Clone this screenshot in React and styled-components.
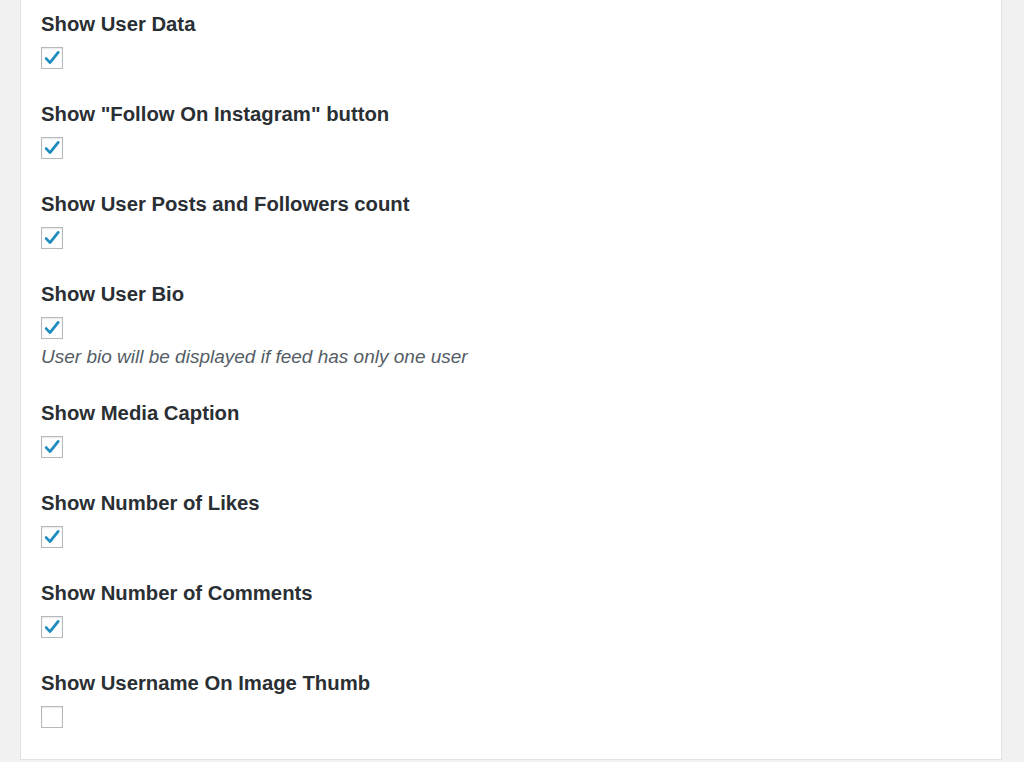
import React, { useState } from 'react';
import styled, { createGlobalStyle } from 'styled-components';

const GlobalStyle = createGlobalStyle`
  html, body {
    margin: 0;
    padding: 0;
    background: #ffffff;
  }
  body {
    font-family: "Liberation Sans", Arial, sans-serif;
    color: #23282d;
  }
`;

const Wrapper = styled.div`
  background: #f1f1f1;
  padding: 0 22px 2px 20px;
`;

const Panel = styled.div`
  background: #ffffff;
  border: 1px solid #e2e2e2;
  border-top: none;
  padding: 10px 20px 0 20px;
`;

const Row = styled.div`
  margin-bottom: 31px;
`;

const Label = styled.div`
  font-size: 20.3px;
  font-weight: 700;
  line-height: 28px;
  margin-bottom: 9px;
  color: #2a2f34;
`;

const Box = styled.button`
  display: flex;
  align-items: center;
  justify-content: center;
  width: 22px;
  height: 22px;
  padding: 0;
  margin: 0;
  background: #ffffff;
  border: 1px solid #b4b9be;
  box-shadow: inset 0 1px 2px rgba(0, 0, 0, 0.1);
  cursor: pointer;
`;

const Hint = styled.div`
  font-size: 19px;
  font-style: italic;
  line-height: 22px;
  margin-top: 6.5px;
  color: #555d66;
`;

function Check() {
  return (
    <svg width="18" height="18" viewBox="0 0 18 18">
      <path
        d="M3.2 9.6 L7 13.6 L15.2 3.4"
        fill="none"
        stroke="#1e8cbe"
        strokeWidth="2.8"
        strokeLinecap="round"
        strokeLinejoin="round"
      />
    </svg>
  );
}

const options = [
  { label: 'Show User Data', on: true },
  { label: 'Show "Follow On Instagram" button', on: true },
  { label: 'Show User Posts and Followers count', on: true },
  { label: 'Show User Bio', on: true, hint: 'User bio will be displayed if feed has only one user' },
  { label: 'Show Media Caption', on: true },
  { label: 'Show Number of Likes', on: true },
  { label: 'Show Number of Comments', on: true },
  { label: 'Show Username On Image Thumb', on: false },
];

export default function App() {
  const [values, setValues] = useState(options.map((o) => o.on));

  const toggle = (i) =>
    setValues((v) => v.map((x, j) => (j === i ? !x : x)));

  return (
    <>
      <GlobalStyle />
      <Wrapper>
        <Panel>
          {options.map((o, i) => (
            <Row key={o.label}>
              <Label>{o.label}</Label>
              <Box type="button" onClick={() => toggle(i)} aria-pressed={values[i]}>
                {values[i] && <Check />}
              </Box>
              {o.hint && <Hint>{o.hint}</Hint>}
            </Row>
          ))}
        </Panel>
      </Wrapper>
    </>
  );
}
